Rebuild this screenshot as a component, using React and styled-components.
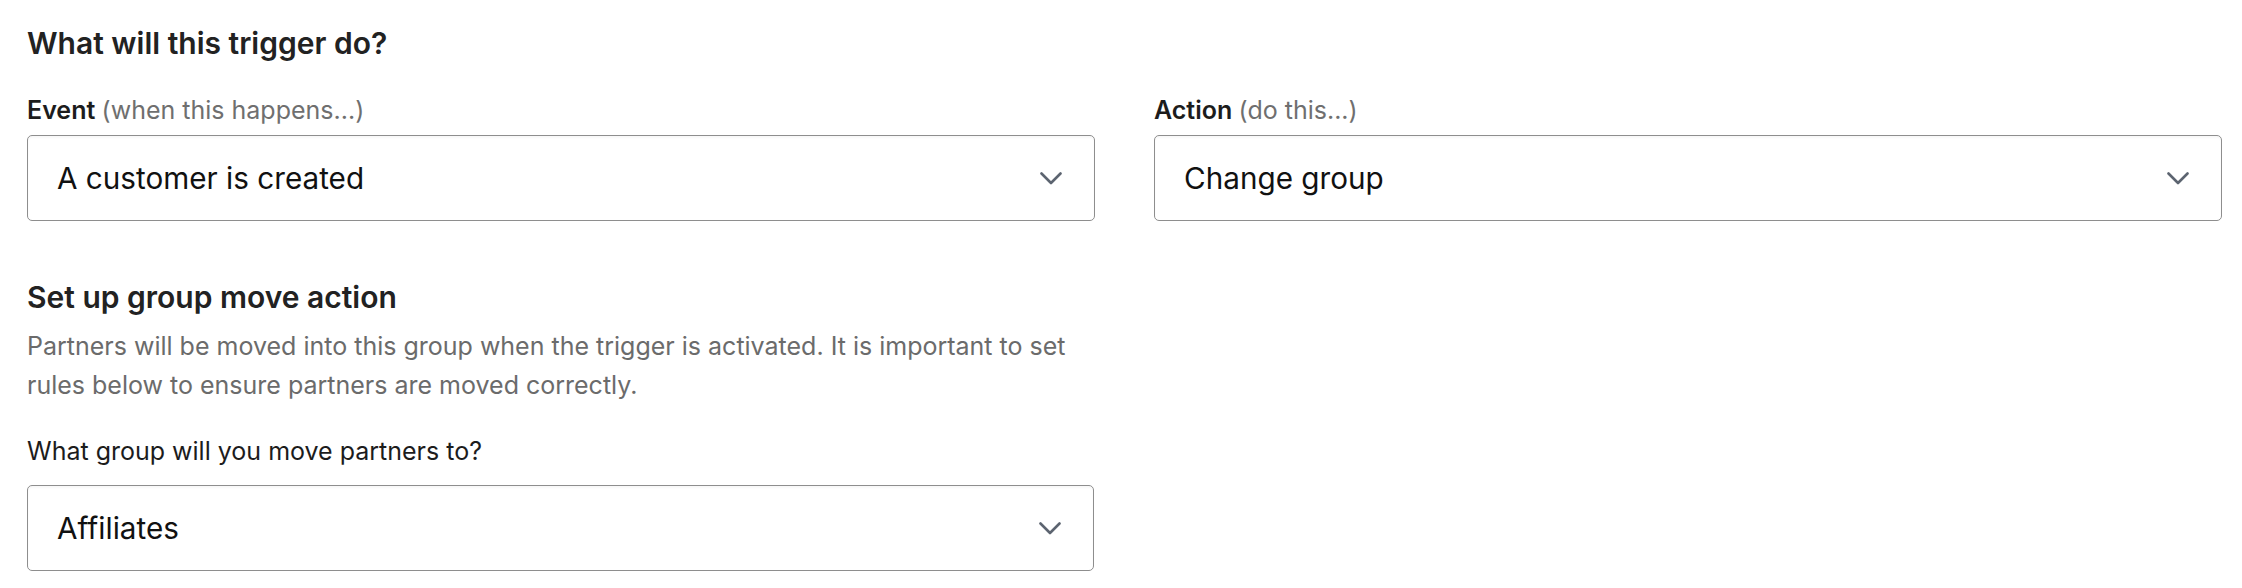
import React from "react";
import styled, { createGlobalStyle } from "styled-components";

const GlobalStyle = createGlobalStyle`
  html, body {
    margin: 0;
    padding: 0;
    background: #ffffff;
  }
  body {
    font-family: Inter, "Noto Sans", "Liberation Sans", sans-serif;
    color: #1f1f1f;
    -webkit-font-smoothing: antialiased;
  }
`;

const Page = styled.div`
  padding: 25px 20px 0 27px;
  width: 2242px;
  box-sizing: border-box;
`;

const Heading = styled.h2`
  margin: 0;
  font-size: 30px;
  line-height: 36px;
  font-weight: 600;
  color: #222222;
`;

const Columns = styled.div`
  display: grid;
  grid-template-columns: 1fr 1fr;
  column-gap: 59px;
  margin-top: 35px;
`;

const Field = styled.div`
  display: flex;
  flex-direction: column;
`;

const Label = styled.label`
  font-size: 25px;
  line-height: 28px;
  font-weight: ${({ $strong }) => ($strong ? 600 : 400)};
  color: #1c1c1c;
  margin-bottom: ${({ $gap }) => $gap || 11}px;

  span {
    font-weight: 400;
    color: #6f6f6f;
  }
`;

const SelectBox = styled.div`
  height: 86px;
  box-sizing: border-box;
  border: 1.5px solid #8e8e8e;
  border-radius: 5px;
  box-shadow: inset 0 2px 2px rgba(0, 0, 0, 0.03);
  display: flex;
  align-items: center;
  justify-content: space-between;
  padding: 0 32px 0 29px;
  font-size: 29.7px;
  color: #111111;
  background: #ffffff;
`;

const Section = styled.div`
  width: 1067px;
  margin-top: 58px;
`;

const Help = styled.p`
  margin: 12px 0 33px;
  font-size: 25px;
  line-height: 38.6px;
  color: #6b6b6b;
`;

const Chevron = () => (
  <svg width="22" height="13" viewBox="0 0 22 13" fill="none">
    <polyline
      points="1.5,1.5 11,11 20.5,1.5"
      stroke="#5c6470"
      strokeWidth="2.6"
      strokeLinecap="round"
      strokeLinejoin="round"
    />
  </svg>
);

const Select = ({ value }) => (
  <SelectBox>
    <span>{value}</span>
    <Chevron />
  </SelectBox>
);

export default function App() {
  return (
    <>
      <GlobalStyle />
      <Page>
        <Heading>What will this trigger do?</Heading>
        <Columns>
          <Field>
            <Label $strong>
              Event <span>(when this happens...)</span>
            </Label>
            <Select value="A customer is created" />
          </Field>
          <Field>
            <Label $strong>
              Action <span>(do this...)</span>
            </Label>
            <Select value="Change group" />
          </Field>
        </Columns>
        <Section>
          <Heading>Set up group move action</Heading>
          <Help>
            Partners will be moved into this group when the trigger is
            activated. It is important to set rules below to ensure partners
            are moved correctly.
          </Help>
          <Field>
            <Label $gap={20}>What group will you move partners to?</Label>
            <Select value="Affiliates" />
          </Field>
        </Section>
      </Page>
    </>
  );
}
